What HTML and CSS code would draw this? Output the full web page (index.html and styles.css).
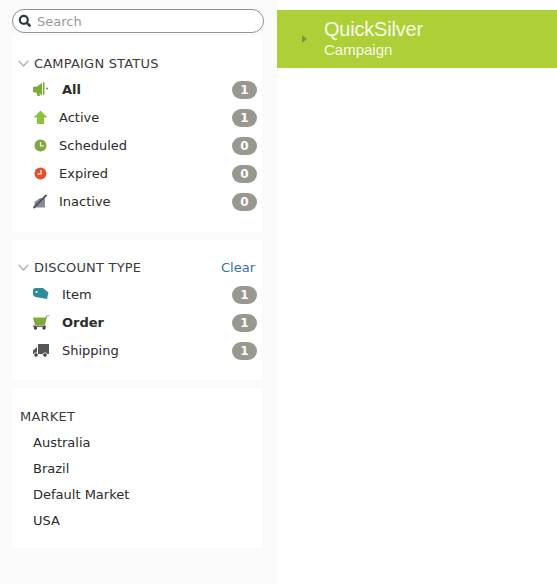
FILE: index.html
```html
<!DOCTYPE html>
<html lang="en">
<head>
<meta charset="utf-8">
<title>Campaigns</title>
<link rel="stylesheet" href="styles.css">
</head>
<body>
<div class="layout">
  <aside class="sidebar">
    <div class="search">
      <svg class="search-icon" width="14" height="14" viewBox="0 0 14 14"><circle cx="5.8" cy="5.8" r="4" fill="none" stroke="#2f3b3c" stroke-width="2.2"/><path d="M8.8 8.8L12.4 12.4" stroke="#2f3b3c" stroke-width="2.6"/></svg>
      <span class="search-text">Search</span>
    </div>
    <section class="card card-status">
      <div class="head"><svg class="chev" width="11" height="7" viewBox="0 0 11 7"><path d="M.7.7L5.5 6 10.3.7" fill="none" stroke="#b4b8b8" stroke-width="1.6"/></svg><span class="title">CAMPAIGN STATUS</span></div>
      <div class="row bold wide"><svg class="ico" width="18" height="16" viewBox="0 0 18 16"><path d="M1 6L5 5.500 10 2V14.500L7.500 12.500 8 15H5.500L4.500 11.500H2.500L1 11z" fill="#7cab36"/><path d="M11 1.500L12.500 1V14L11 13.500z" fill="#7cab36"/><circle cx="15" cy="7.500" r="1" fill="#6a8a40"/></svg><span class="label">All</span><span class="badge">1</span></div>
      <div class="row"><svg class="ico" width="18" height="16" viewBox="0 0 18 16"><path d="M9.500 1.500L16.500 8.500H13V15H6V8.500H2.500z" fill="#8fc13e"/></svg><span class="label">Active</span><span class="badge">1</span></div>
      <div class="row"><svg class="ico" width="18" height="16" viewBox="0 0 18 16"><circle cx="9.500" cy="8.500" r="6" fill="#80a840"/><path d="M9.500 5V9H13" fill="none" stroke="#fff" stroke-width="1.200"/></svg><span class="label">Scheduled</span><span class="badge">0</span></div>
      <div class="row"><svg class="ico" width="18" height="16" viewBox="0 0 18 16"><circle cx="9.500" cy="8.500" r="6" fill="#e2502f"/><path d="M10 5V9H6.500" fill="none" stroke="#fff" stroke-width="1.200"/></svg><span class="label">Expired</span><span class="badge">0</span></div>
      <div class="row"><svg class="ico" width="18" height="16" viewBox="0 0 18 16"><path d="M3.500 14.500V9L9 5 14 5.500V14.500z" fill="#8a8d95"/><path d="M2.500 15L15.500 2" stroke="#50535c" stroke-width="2"/></svg><span class="label">Inactive</span><span class="badge">0</span></div>
    </section>
    <section class="card card-discount">
      <div class="head"><svg class="chev" width="11" height="7" viewBox="0 0 11 7"><path d="M.7.7L5.5 6 10.3.7" fill="none" stroke="#b4b8b8" stroke-width="1.600"/></svg><span class="title">DISCOUNT TYPE</span><span class="clear">Clear</span></div>
      <div class="row wide"><svg class="ico" width="18" height="16" viewBox="0 0 18 16"><path d="M1 4.500Q1 2 3.500 2H11L16.500 6.500 15 13 3.500 11Q1 10.500 1 8z" fill="#2d8e99"/><circle cx="4.500" cy="6" r="1.100" fill="#fff"/></svg><span class="label">Item</span><span class="badge">1</span></div>
      <div class="row bold wide"><svg class="ico" width="18" height="16" viewBox="0 0 18 16"><path d="M1 3.500H13.500L14 2l3.500-1-.3 1-2.200.5L13 11H3z" fill="#7cab36"/><path d="M1 11.500H14V12.800H1z" fill="#555"/><circle cx="3.500" cy="14" r="1.700" fill="#444"/><circle cx="12" cy="14" r="1.700" fill="#444"/></svg><span class="label">Order</span><span class="badge">1</span></div>
      <div class="row wide"><svg class="ico" width="18" height="16" viewBox="0 0 18 16"><path d="M6 2H17V12H6z" fill="#555"/><path d="M5 5V12H1V8.500z" fill="#555"/><circle cx="4" cy="13" r="2.200" fill="#444" stroke="#fff" stroke-width=".8"/><circle cx="13" cy="13" r="2.200" fill="#444" stroke="#fff" stroke-width=".8"/></svg><span class="label">Shipping</span><span class="badge">1</span></div>
    </section>
    <section class="card card-market">
      <div class="head head-plain"><span class="title">MARKET</span></div>
      <div class="market">Australia</div>
      <div class="market">Brazil</div>
      <div class="market">Default Market</div>
      <div class="market">USA</div>
    </section>
  </aside>
  <main class="content">
    <div class="banner">
      <span class="arrow"></span>
      <div class="banner-text">
        <div class="banner-title">QuickSilver</div>
        <div class="banner-sub">Campaign</div>
      </div>
    </div>
  </main>
</div>
</body>
</html>
```
FILE: styles.css
```css
* { box-sizing: border-box; }
html, body { margin: 0; height: 100%; }
body { font-family: "DejaVu Sans", Verdana, sans-serif; font-size: 13px; color: #2b2b2b; background: #fff; overflow: hidden; }
.layout { display: flex; height: 584px; }
.sidebar { width: 277px; flex: none; background: #fafafa; padding: 9px 0 0 12px; }
.search { width: 252px; height: 24px; border: 1px solid #8e9296; border-radius: 12px; background: #fff; display: flex; align-items: center; padding-left: 5px; gap: 5px; }
.search-icon { flex: none; }
.search-text { color: #9a9a9a; font-size: 13px; }
.card { width: 250px; background: #fff; margin-bottom: 8px; }
.card-status { margin-top: 2px; height: 197px; padding-top: 18px; }
.card-discount { height: 140px; padding-top: 17px; }
.card-market { height: 160px; padding-top: 18px; }
.head { display: flex; align-items: center; height: 20px; margin-bottom: 2px; padding: 0 7px 0 6px; }
.card-discount .head { margin-bottom: 3px; }
.head-plain { padding-left: 8px; margin-bottom: 4px; }
.chev { flex: none; margin-right: 5px; }
.title { font-size: 13px; color: #3a3a3a; letter-spacing: .2px; }
.clear { margin-left: auto; color: #3a6ea5; font-size: 13px; }
.row { display: flex; align-items: center; height: 28px; padding: 0 5px 0 19px; }
.wide { padding-left: 20px; }
.ico { flex: none; }
.label { margin-left: 10px; }
.wide .label { margin-left: 12px; }
.bold .label { font-weight: 700; }
.badge { margin-left: auto; margin-top: 2px; width: 25px; height: 18px; border-radius: 9px; background: #999890; color: #fff; font-size: 12px; font-weight: 700; display: flex; align-items: center; justify-content: center; }
.market { height: 26px; line-height: 26px; padding-left: 21px; }
.content { flex: 1; background: #fff; padding-top: 10px; }
.banner { height: 58px; background: #aecf38; display: flex; align-items: center; padding-left: 25px; }
.arrow { width: 0; height: 0; border-left: 5px solid #85933f; border-top: 4px solid transparent; border-bottom: 4px solid transparent; margin-right: 17px; }
.banner-text { font-family: "Liberation Sans", Arial, sans-serif; color: #f8fbe6; margin-top: -2px; }
.banner-title { font-size: 20px; line-height: 24px; letter-spacing: -.2px; }
.banner-sub { font-size: 15px; line-height: 18px; }
```
